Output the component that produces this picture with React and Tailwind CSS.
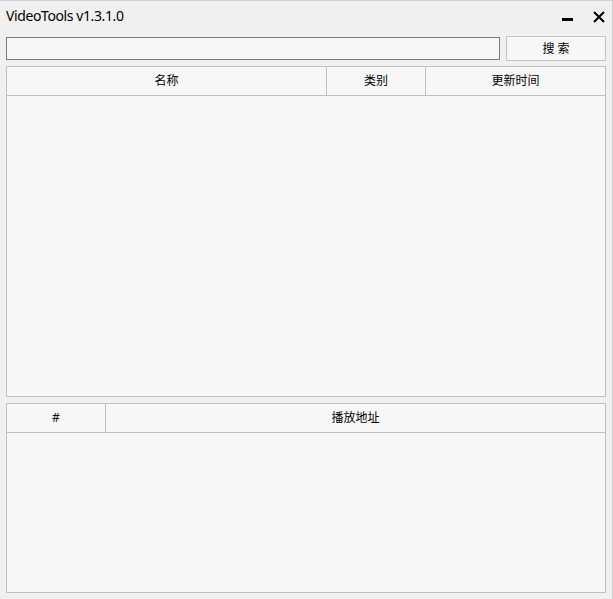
export default function App() {
  const font = { fontFamily: '"Segoe UI", "Noto Sans", "Noto Sans CJK SC", sans-serif' };
  return (
    <div
      className="w-[613px] h-[599px] bg-[#f0f0f0] border-t border-r border-[#cfcfcf] flex flex-col text-black overflow-hidden"
      style={font}
    >
      {/* Title bar */}
      <div className="h-[30px] shrink-0 flex items-center pl-[6px] pr-[7px]">
        <span className="text-[14px] leading-none mt-[-1px] tracking-[-0.4px]">VideoTools v1.3.1.0</span>
        <div className="ml-auto flex items-center gap-[20px] mt-[1px]">
          <div className="w-[11px] h-[3px] bg-black mt-[5px]" />
          <svg width="12" height="12" viewBox="0 0 12 12">
            <path d="M1 1 L11 11 M11 1 L1 11" stroke="black" strokeWidth="2" />
          </svg>
        </div>
      </div>
      {/* Search row */}
      <div className="flex items-center pl-[6px] pr-[6px] h-[25px] mt-[5px] shrink-0">
        <div className="w-[494px] h-[23px] border border-[#7a7a7a] bg-[#f7f7f7]" />
        <div className="ml-[6px] w-[100px] h-[25px] border border-[#c4c4c4] bg-[#f7f7f7] flex items-center justify-center text-[12px]">
          搜 索
        </div>
      </div>
      {/* Table 1 */}
      <div className="mx-[6px] mt-[5px] h-[331px] shrink-0 border border-[#c0c0c0] bg-[#f7f7f7] flex flex-col">
        <div className="h-[29px] border-b border-[#c0c0c0] flex text-[12px]">
          <div className="w-[320px] border-r border-[#c0c0c0] flex items-center justify-center">名称</div>
          <div className="w-[99px] border-r border-[#c0c0c0] flex items-center justify-center">类别</div>
          <div className="flex-1 flex items-center justify-center">更新时间</div>
        </div>
      </div>
      {/* Table 2 */}
      <div className="mx-[6px] mt-[6px] h-[190px] shrink-0 border border-[#c0c0c0] bg-[#f7f7f7] flex flex-col">
        <div className="h-[29px] border-b border-[#c0c0c0] flex text-[12px]">
          <div className="w-[99px] border-r border-[#c0c0c0] flex items-center justify-center">#</div>
          <div className="flex-1 flex items-center justify-center">播放地址</div>
        </div>
      </div>
    </div>
  );
}
